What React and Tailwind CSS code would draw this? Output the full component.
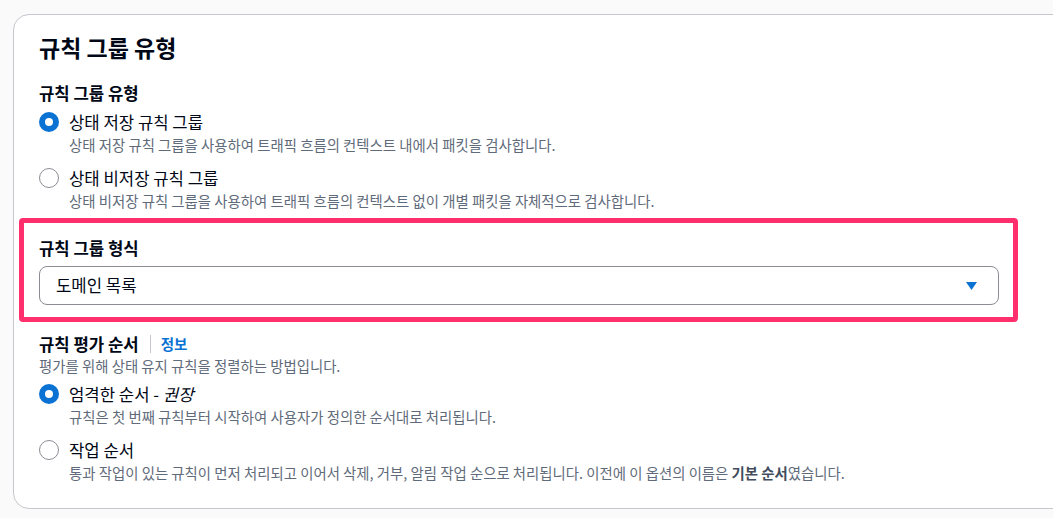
import React from 'react';

const font = { fontFamily: '"Noto Sans CJK KR", "Noto Sans", sans-serif' };

const Radio = ({ checked, label, desc }) => (
  <div className="flex flex-col">
    <div className="flex items-center h-[22px]">
      {checked ? (
        <span className="w-[20px] h-[20px] rounded-full bg-[#0972d3] flex items-center justify-center shrink-0">
          <span className="w-[8px] h-[8px] rounded-full bg-white" />
        </span>
      ) : (
        <span className="w-[20px] h-[20px] rounded-full border-[1.5px] border-[#8c8c94] bg-white shrink-0" />
      )}
      <span className="ml-[10px] text-[16.7px] leading-[22px] text-[#000716]">{label}</span>
    </div>
    <div className="ml-[30px] mt-[2px] text-[14.4px] leading-[20px] text-[#5f6b7a]">{desc}</div>
  </div>
);

export default function App() {
  return (
    <div className="min-h-screen bg-[#fafafa] overflow-hidden pt-[14px] pl-[13px]" style={font}>
      <div className="w-[1060px] bg-white border border-[#c6c6cd] rounded-[16px] pl-[25px] pt-[16px] pb-[25px]">
        {/* Header */}
        <h2 className="text-[23px] leading-[32px] font-bold text-[#000716]">규칙 그룹 유형</h2>

        {/* Rule group type */}
        <div className="mt-[19px] text-[16.7px] leading-[22px] font-bold text-[#000716]">규칙 그룹 유형</div>
        <div className="mt-[7px]">
          <Radio
            checked
            label="상태 저장 규칙 그룹"
            desc="상태 저장 규칙 그룹을 사용하여 트래픽 흐름의 컨텍스트 내에서 패킷을 검사합니다."
          />
        </div>
        <div className="mt-[12px]">
          <Radio
            label="상태 비저장 규칙 그룹"
            desc="상태 비저장 규칙 그룹을 사용하여 트래픽 흐름의 컨텍스트 없이 개별 패킷을 자체적으로 검사합니다."
          />
        </div>

        {/* Highlighted format */}
        <div className="mt-[7px] -ml-[20px] w-[999px] border-[5px] border-[#ff2e6c] rounded-[4px] pl-[15px] pr-[14px] pt-[14px] pb-[12px]">
          <div className="text-[16.7px] leading-[22px] font-bold text-[#000716]">규칙 그룹 형식</div>
          <div className="mt-[7px] h-[39px] border border-[#8c8c94] rounded-[8px] flex items-center justify-between pl-[16px] pr-[21px]">
            <span className="text-[16.7px] text-[#000716]">도메인 목록</span>
            <svg width="11" height="8" viewBox="0 0 11 8">
              <path d="M0 0 H11 L5.5 8 Z" fill="#0972d3" />
            </svg>
          </div>
        </div>

        {/* Rule evaluation order */}
        <div className="mt-[11px] flex items-center h-[22px]">
          <span className="text-[16.7px] leading-[22px] font-bold text-[#000716]">규칙 평가 순서</span>
          <span className="ml-[11px] mr-[10px] w-px h-[18px] bg-[#c6c6cd]" />
          <span className="text-[14.5px] font-bold text-[#0972d3]">정보</span>
        </div>
        <div className="mt-[1px] text-[14.4px] leading-[20px] text-[#5f6b7a]">평가를 위해 상태 유지 규칙을 정렬하는 방법입니다.</div>
        <div className="mt-[7px]">
          <Radio
            checked
            label={<>엄격한 순서 - <i>권장</i></>}
            desc="규칙은 첫 번째 규칙부터 시작하여 사용자가 정의한 순서대로 처리됩니다."
          />
        </div>
        <div className="mt-[12px]">
          <Radio
            label="작업 순서"
            desc={<>통과 작업이 있는 규칙이 먼저 처리되고 이어서 삭제, 거부, 알림 작업 순으로 처리됩니다. 이전에 이 옵션의 이름은 <b className="text-[#414d5c]">기본 순서</b>였습니다.</>}
          />
        </div>
      </div>
    </div>
  );
}
